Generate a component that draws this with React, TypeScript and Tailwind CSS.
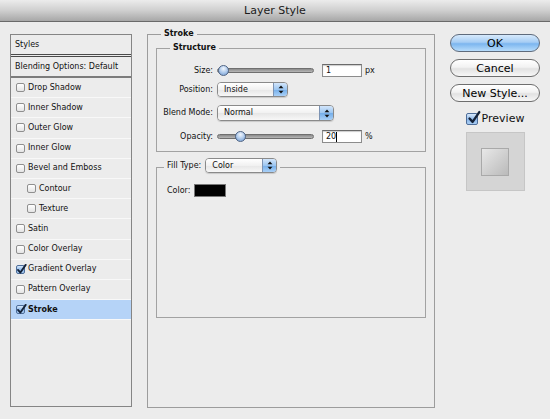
import React from "react";

function Checkbox({ checked = false, big = false }: { checked?: boolean; big?: boolean }) {
  const size = big ? "w-[12px] h-[12px]" : "w-[9px] h-[9px]";
  const look = checked
    ? "border-[#4d6d99] bg-[linear-gradient(to_bottom,#d6e8fb,#8db8ea_55%,#a9cdf3)]"
    : "border-[#8f8f8f] bg-[linear-gradient(to_bottom,#ffffff,#e4e4e4)]";
  return (
    <span className={`relative inline-flex shrink-0 rounded-[2px] border ${size} ${look}`}>
      {checked && (
        <svg
          viewBox="0 0 10 10"
          className={big ? "absolute left-[0px] top-[-3px] w-[14px] h-[14px] overflow-visible" : "absolute left-[-1px] top-[-2px] w-[11px] h-[11px] overflow-visible"}
        >
          <path d="M1.8 5.4 L4 7.8 L8.8 0.8" fill="none" stroke="#142238" strokeWidth="1.7" strokeLinecap="round" strokeLinejoin="round" />
        </svg>
      )}
    </span>
  );
}

function Stepper() {
  return (
    <svg viewBox="0 0 7 11" className="w-[6px] h-[9px]">
      <path d="M3.5 0.5 L6.5 4 L0.5 4 Z" fill="#111" />
      <path d="M3.5 10.5 L6.5 7 L0.5 7 Z" fill="#111" />
    </svg>
  );
}

function Dropdown({ value, width, tall = false }: { value: string; width: string; tall?: boolean }) {
  return (
    <div className={`flex ${width} ${tall ? "h-[16px]" : "h-[15px]"} rounded-[4px] border border-[#8a8a8a] overflow-hidden shadow-[0_1px_1px_rgba(0,0,0,0.15)]`}>
      <div className="flex-1 flex items-center pl-[6px] bg-[linear-gradient(to_bottom,#ffffff,#f1f1f1_50%,#e6e6e6_51%,#f7f7f7)] text-[#111]">
        {value}
      </div>
      <div className="w-[14px] flex items-center justify-center border-l border-[#7d93b3] bg-[linear-gradient(to_bottom,#d3e6fb,#9cc6f1_50%,#74aeea_51%,#a9d0f7)]">
        <Stepper />
      </div>
    </div>
  );
}

function Slider({ thumb }: { thumb: string }) {
  return (
    <div className="relative w-[97px] h-[12px] flex items-center">
      <div className="w-full h-[5px] rounded-full border border-[#6f6f6f] bg-[linear-gradient(to_bottom,#8a8a8a,#b8b8b8)]" />
      <div className={`absolute top-[0px] ${thumb} w-[11px] h-[11px] rounded-full border border-[#4f6484] bg-[radial-gradient(circle_at_50%_30%,#f2f7fd,#a9c6ea_55%,#6f97cc)]`} />
    </div>
  );
}

function NumberInput({ value, caret = false }: { value: string; caret?: boolean }) {
  return (
    <div className="w-[40px] h-[13px] flex items-center pl-[3px] bg-white border border-[#8c8c8c] border-t-[#6a6a6a] shadow-[inset_0_1px_1px_rgba(0,0,0,0.2)] text-[#111]">
      {value}
      {caret && <span className="w-[1px] h-[10px] bg-black" />}
    </div>
  );
}

const items: { label: string; checked?: boolean; indent?: boolean; selected?: boolean }[] = [
  { label: "Drop Shadow" },
  { label: "Inner Shadow" },
  { label: "Outer Glow" },
  { label: "Inner Glow" },
  { label: "Bevel and Emboss" },
  { label: "Contour", indent: true },
  { label: "Texture", indent: true },
  { label: "Satin" },
  { label: "Color Overlay" },
  { label: "Gradient Overlay", checked: true },
  { label: "Pattern Overlay" },
  { label: "Stroke", checked: true, selected: true },
];

export default function App() {
  return (
    <div className="w-[550px] h-[419px] overflow-hidden bg-[#ececec] font-['DejaVu_Sans',sans-serif] text-[8px] leading-[10px] text-[#111]">
      {/* title bar */}
      <div className="h-[22px] flex items-center justify-center border-b border-[#6a6a6a] bg-[linear-gradient(to_bottom,#ececec,#cfcfcf_50%,#a7a7a7)] text-[11px] text-[#1b1b1b]">
        Layer Style
      </div>

      <div className="flex pl-[10px] pt-[7px] gap-[15px]">
        {/* left list */}
        <div className="mt-[5px] w-[122px] h-[373px] border border-[#858585] flex flex-col">
          <div className="h-[22px] shrink-0 flex items-center pl-[4px] border-b-[3px] border-double border-[#4a4a4a]">
            Styles
          </div>
          <div className="h-[21px] shrink-0 flex items-center pl-[4px] border-b-2 border-[#7c7c7c]">
            Blending Options: Default
          </div>
          {items.map((it) => (
            <div
              key={it.label}
              className={`h-[20.2px] shrink-0 flex items-center gap-[3px] border-b border-[#f8f8f8] ${it.indent ? "pl-[16px]" : "pl-[5px]"} ${it.selected ? "bg-[#b5d3f7]" : ""}`}
            >
              <Checkbox checked={it.checked} />
              <span className={it.selected ? "font-bold" : ""}>{it.label}</span>
            </div>
          ))}
        </div>

        {/* main group */}
        <fieldset className="w-[288px] h-[379px] border border-[#9c9c9c] px-[8px]">
          <legend className="ml-[5px] px-[3px] font-bold leading-[10px]">Stroke</legend>

          <fieldset className="mt-[4px] h-[109px] border border-[#a2a2a2] flex flex-col">
            <legend className="ml-[13px] px-[3px] font-bold leading-[10px]">Structure</legend>
            <div className="mt-[11px] flex items-center h-[13px]">
              <span className="w-[56px] text-right">Size:</span>
              <div className="ml-[4px]"><Slider thumb="left-[1px]" /></div>
              <div className="ml-[8px]"><NumberInput value="1" /></div>
              <span className="ml-[3px]">px</span>
            </div>
            <div className="mt-[5px] flex items-center h-[15px]">
              <span className="w-[56px] text-right">Position:</span>
              <div className="ml-[4px]"><Dropdown value="Inside" width="w-[71px]" /></div>
            </div>
            <div className="mt-[8px] flex items-center h-[16px]">
              <span className="w-[56px] text-right">Blend Mode:</span>
              <div className="ml-[4px]"><Dropdown value="Normal" width="w-[117px]" tall /></div>
            </div>
            <div className="mt-[9px] flex items-center h-[13px]">
              <span className="w-[56px] text-right">Opacity:</span>
              <div className="ml-[4px]"><Slider thumb="left-[18px]" /></div>
              <div className="ml-[8px]"><NumberInput value="20" caret /></div>
              <span className="ml-[3px]">%</span>
            </div>
          </fieldset>

          <fieldset className="mt-[6px] h-[160px] border border-[#a2a2a2]">
            <legend className="ml-[7px] px-[3px] pb-[4px] flex items-center gap-[4px]">
              <span>Fill Type:</span>
              <Dropdown value="Color" width="w-[72px]" />
            </legend>
            <div className="mt-[7px] ml-[10px] flex items-center gap-[4px]">
              <span>Color:</span>
              <div className="w-[32px] h-[13px] bg-black border border-[#777]" />
            </div>
          </fieldset>
        </fieldset>

        {/* right column */}
        <div className="mt-[5px] w-[90px] flex flex-col items-center text-[11px] leading-[13px]">
          <button className="w-full h-[18px] rounded-full border border-[#5f6b7c] bg-[linear-gradient(to_bottom,#d7eafc,#a6cdf4_45%,#7cb6ef_55%,#b7dcfb)] text-black">
            OK
          </button>
          <button className="mt-[7px] w-full h-[18px] rounded-full border border-[#6e6e6e] bg-[linear-gradient(to_bottom,#ffffff,#f2f2f2_45%,#e2e2e2_55%,#f7f7f7)] text-black">
            Cancel
          </button>
          <button className="mt-[7px] w-full h-[18px] rounded-full border border-[#6e6e6e] bg-[linear-gradient(to_bottom,#ffffff,#f2f2f2_45%,#e2e2e2_55%,#f7f7f7)] text-black">
            New Style...
          </button>
          <div className="mt-[10px] flex items-center gap-[4px]">
            <Checkbox checked big />
            <span>Preview</span>
          </div>
          <div className="mt-[7px] w-[59px] h-[59px] bg-[#d5d5d5] border border-[#c6c6c6] flex items-center justify-center">
            <div className="w-[28px] h-[28px] border border-[#a9a9a9] bg-[linear-gradient(135deg,#e8e8e8,#bababa)]" />
          </div>
        </div>
      </div>
    </div>
  );
}
